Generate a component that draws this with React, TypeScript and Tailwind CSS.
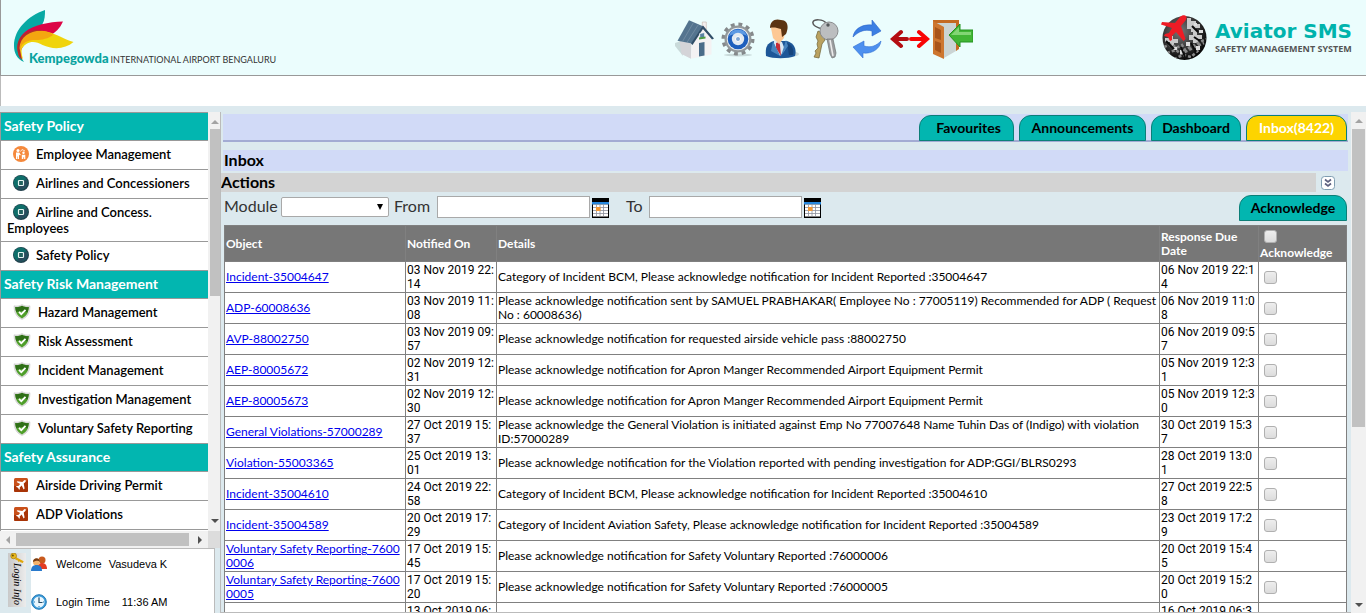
import React from "react";

type Kind = "people" | "dot" | "shield" | "plane";

const menu: { title: string; items: { label: string; kind: Kind }[] }[] = [
  {
    title: "Safety Policy",
    items: [
      { label: "Employee Management", kind: "people" },
      { label: "Airlines and Concessioners", kind: "dot" },
      { label: "Airline and Concess. Employees", kind: "dot" },
      { label: "Safety Policy", kind: "dot" },
    ],
  },
  {
    title: "Safety Risk Management",
    items: [
      { label: "Hazard Management", kind: "shield" },
      { label: "Risk Assessment", kind: "shield" },
      { label: "Incident Management", kind: "shield" },
      { label: "Investigation Management", kind: "shield" },
      { label: "Voluntary Safety Reporting", kind: "shield" },
    ],
  },
  {
    title: "Safety Assurance",
    items: [
      { label: "Airside Driving Permit", kind: "plane" },
      { label: "ADP Violations", kind: "plane" },
    ],
  },
];

const rows: { object: string[]; notified: string[]; details: string[]; due: string[] }[] = [
  { object: ["Incident-35004647"], notified: ["03 Nov 2019 22:", "14"], details: ["Category of Incident BCM, Please acknowledge notification for Incident Reported :35004647"], due: ["06 Nov 2019 22:1", "4"] },
  { object: ["ADP-60008636"], notified: ["03 Nov 2019 11:", "08"], details: ["Please acknowledge notification sent by SAMUEL PRABHAKAR( Employee No : 77005119) Recommended for ADP ( Request", "No : 60008636)"], due: ["06 Nov 2019 11:0", "8"] },
  { object: ["AVP-88002750"], notified: ["03 Nov 2019 09:", "57"], details: ["Please acknowledge notification for requested airside vehicle pass :88002750"], due: ["06 Nov 2019 09:5", "7"] },
  { object: ["AEP-80005672"], notified: ["02 Nov 2019 12:", "31"], details: ["Please acknowledge notification for Apron Manger Recommended Airport Equipment Permit"], due: ["05 Nov 2019 12:3", "1"] },
  { object: ["AEP-80005673"], notified: ["02 Nov 2019 12:", "30"], details: ["Please acknowledge notification for Apron Manger Recommended Airport Equipment Permit"], due: ["05 Nov 2019 12:3", "0"] },
  { object: ["General Violations-57000289"], notified: ["27 Oct 2019 15:", "37"], details: ["Please acknowledge the General Violation is initiated against Emp No 77007648 Name Tuhin Das of (Indigo) with violation", "ID:57000289"], due: ["30 Oct 2019 15:3", "7"] },
  { object: ["Violation-55003365"], notified: ["25 Oct 2019 13:", "01"], details: ["Please acknowledge notification for the Violation reported with pending investigation for ADP:GGI/BLRS0293"], due: ["28 Oct 2019 13:0", "1"] },
  { object: ["Incident-35004610"], notified: ["24 Oct 2019 22:", "58"], details: ["Category of Incident BCM, Please acknowledge notification for Incident Reported :35004610"], due: ["27 Oct 2019 22:5", "8"] },
  { object: ["Incident-35004589"], notified: ["20 Oct 2019 17:", "29"], details: ["Category of Incident Aviation Safety, Please acknowledge notification for Incident Reported :35004589"], due: ["23 Oct 2019 17:2", "9"] },
  { object: ["Voluntary Safety Reporting-7600", "0006"], notified: ["17 Oct 2019 15:", "45"], details: ["Please acknowledge notification for Safety Voluntary Reported :76000006"], due: ["20 Oct 2019 15:4", "5"] },
  { object: ["Voluntary Safety Reporting-7600", "0005"], notified: ["17 Oct 2019 15:", "20"], details: ["Please acknowledge notification for Safety Voluntary Reported :76000005"], due: ["20 Oct 2019 15:2", "0"] },
  { object: [""], notified: ["13 Oct 2019 06:", "31"], details: [""], due: ["16 Oct 2019 06:3", "1"] },
];

const Lines = ({ text }: { text: string[] }) => (
  <>
    {text.map((t, i) => (
      <React.Fragment key={i}>
        {i > 0 && <br />}
        {t}
      </React.Fragment>
    ))}
  </>
);

function MenuIcon({ kind }: { kind: Kind }) {
  if (kind === "people")
    return (
      <svg viewBox="0 0 16 16" className="mr-[7px] ml-1.5 inline-block size-4 align-[-3px]">
        <circle cx="8" cy="8" r="8" fill="#f5893c" />
        <g fill="#fff">
          <circle cx="5" cy="4.4" r="1.5" />
          <path d="M3 6.5h3.2l1.6 2.2-.8.7-1-.9V13H4.800V10.500H4.300V13H3z" />
          <circle cx="10.500" cy="6.800" r="1.200" />
          <path d="M8.800 8.800h3.500V13h-1.200v-1.700h-.8V13H8.800z" />
        </g>
        <path d="M7.500 5.500l1.500-2 3 1.500" stroke="#fff" fill="none" strokeWidth=".8" />
      </svg>
    );
  if (kind === "dot")
    return (
      <svg viewBox="0 0 16 16" className="mr-[7px] ml-1.5 inline-block size-4 align-[-3px]">
        <circle cx="8" cy="8" r="8" fill="#23414d" />
        <circle cx="7.600" cy="7.600" r="7" fill="#0f6e6a" />
        <path d="M13 4a6.500 6.500 0 0 1-9 9z" fill="#2a4b5c" />
        <rect x="5.500" y="5.500" width="5" height="5" rx=".8" fill="#21625f" stroke="#e8f6f3" strokeWidth="1.200" />
      </svg>
    );
  if (kind === "shield")
    return (
      <svg viewBox="0 0 18 16" className="mr-[7px] ml-1.5 inline-block h-4 w-[18px] align-[-3px]">
        <path d="M9 .5c2.500 1.500 5 1.700 8 1.300 0 6-1.500 11-8 13.700C2.500 12.800 1 7.800 1 1.800 4 2.200 6.500 2 9 .5z" fill="#dcdcdc" stroke="#c4c4c4" strokeWidth=".5" />
        <path d="M9 1.800c2.200 1.300 4.500 1.600 6.700 1.300-.2 5-1.700 9-6.700 11.300C4 12.100 2.500 8.100 2.300 3.100 4.500 3.400 6.800 3.100 9 1.800z" fill="#4f9f2a" />
        <path d="M9 1.800c2.200 1.300 4.500 1.600 6.700 1.300-.1 2-.5 4-1.200 5.500C11.500 6.500 7 6.500 3.300 8 2.500 6.500 2.400 5 2.300 3.100 4.500 3.400 6.800 3.100 9 1.800z" fill="#2f6f17" />
        <path d="M6 7.800l2.300 2.300 4.200-4.300" stroke="#fff" strokeWidth="1.800" fill="none" />
      </svg>
    );
  return (
    <svg viewBox="0 0 16 16" className="mr-[7px] ml-1.5 inline-block size-4 align-[-3px]">
      <rect x="1" y="1" width="14" height="14" rx="1.500" fill="#c9501a" />
      <path d="M1 9c5 0 10-2 14-6v10.500a1.500 1.500 0 0 1-1.500 1.500h-11A1.500 1.500 0 0 1 1 13.500z" fill="#a83407" />
      <path d="M12.500 3.200c.6.600.2 1.400-.4 2L10.700 6.600l.9 5-1 .8-1.900-3.800-2 1.900.2 1.600-.8.7-1.100-2-2-1.100.7-.8 1.600.2 1.900-2L3.600 5.100l.8-.9 5 .9 1.300-1.400c.6-.6 1.300-1 1.800-.5z" fill="#fff" />
    </svg>
  );
}

function AirportLogo() {
  return (
    <svg viewBox="0 0 62 54" className="h-[54px] w-[62px]" aria-hidden="true">
      <path d="M32 0C15 6 1 19 1 36c0 7 3 13 10 16-4-6-5-10-4-15C10 29 20 25 29 15c3-5 3-10 3-15z" fill="#08a9a4" />
      <path d="M50 11.500C36 12 20 15 12 22 6 27 4 34 5 40c0 3 1 6 2 8 0-8 3-14 11-18 14-1 26-5 32-18.500z" fill="#dc0546" />
      <path d="M5 41C4 27 14 20 30 21c11 1 20 8 30.500 11-8 7-20 8-31 3-8-5-16-4-21 4 0 4 .5 7 1.500 10C6 46 5.200 44 5 41z" fill="#f0d40c" />
      <path d="M5 41C3 28 14 19 31 21c5 1 7 2 9 4-5 4-13 5.500-20 5-8 1-12 4-12.500 10 0 4 .5 6 1.500 9C6 46 5.500 44 5 41z" fill="#f4a610" />
      <path d="M5 43C1 28 14 17 31 20.500 17 20 7 27 6.500 38l2.500 12C6.500 47.500 5.500 46 5 43z" fill="#b52a2c" />
    </svg>
  );
}

function GlobeLogo() {
  return (
    <svg viewBox="0 0 46 46" className="size-[46px]" aria-hidden="true">
      <defs>
        <radialGradient id="globe" cx=".4" cy=".35" r=".7">
          <stop offset="0" stopColor="#777" />
          <stop offset=".6" stopColor="#333" />
          <stop offset="1" stopColor="#000" />
        </radialGradient>
        <clipPath id="disc"><circle cx="23.500" cy="23" r="22" /></clipPath>
      </defs>
      <circle cx="23.500" cy="23" r="22" fill="url(#globe)" />
      <g clipPath="url(#disc)">
        <path d="M26 3h4v3h5v3h4v4h-4v4h-5v-3h-4zM28 20h4v-4h4v4h5v4h-4v4h-5v-3h-4zM8 21h4v3h5v4h-4v3H9v-4H4v-4h4z" fill="#c9c9c9" />
        <path d="M3 32l8-3 4 4 6-3 3 5 9-5 12-6M6 38l9-3 5 4 8-4 6-3 9-4M13 44l9-4 8 2 9-8" stroke="#898989" strokeWidth="2.500" strokeDasharray="3 2" fill="none" />
        <path d="M25 27h4v4h-4zM33 8h3v3h-3zM38 15h4v3h-4zM12 32h4v3h-4zM19 35h4v4h-4zM35 31h4v4h-4z" fill="#ddd" />
        <path d="M31 11l6 6M5 26l8 8M30 28l5 9M20 32l4 10M33 22l6 4" stroke="#0b0b0b" strokeWidth="2" />
      </g>
      <path d="M24 .5c2 .5 2 3 .5 5L20 11l4.500 13-2 2L15 17l-4 4v4l-2 1-2-4-4-1 1-2 4-1 3-5L0 9.500 1 7l13 1 5-6c1.500-1.500 3.500-2 5-1.500z" fill="#ee1c25" />
    </svg>
  );
}

const toolbar: { name: string; art: React.ReactNode }[] = [
  {
    name: "Home",
    art: (
      <>
        <path d="M0 24l6-2 2 15-8-10z" fill="#c9dada" />
        <path d="M4.500 22l12 2-.5 15.700-9.500-4.700z" fill="#d4d4d8" />
        <path d="M16.700 24.300L28 9l8.500 10v16.500L16 39.700z" fill="#f4f2f3" />
        <path d="M27.300 3h4v10l-4-4z" fill="#f3efee" stroke="#c5b3ab" strokeWidth=".6" />
        <path d="M2.500 21.700L14 1.300l14.500 6.200-11.500 17z" fill="#54748f" />
        <path d="M7.500 22.500l11-19M12 23.300L23.500 5.500" stroke="#7b94a9" strokeWidth=".7" />
        <path d="M28 6.500l11 13-2 1L28 10 17.500 26l-1.500-1.500z" fill="#304e68" />
        <path d="M24.700 14.500l5-1v5l-5 1z" fill="#5a83a3" stroke="#fff" strokeWidth=".8" />
        <path d="M24 18.500l6.500-1v2l-6.500 1z" fill="#4e9b43" />
        <path d="M24 24l5.500-1v13.500l-5.500 1z" fill="#4a6c89" />
      </>
    ),
  },
  {
    name: "Settings",
    art: (
      <>
        <ellipse cx="20" cy="36" rx="14" ry="1.500" fill="#c9dada" />
        <circle cx="20" cy="20" r="14.500" fill="none" stroke="#85898b" strokeWidth="4" strokeDasharray="3.800 3.790" />
        <circle cx="20" cy="20" r="13.500" fill="#93989a" />
        <circle cx="20" cy="20" r="11.200" fill="#e9edf0" />
        <circle cx="20" cy="20" r="10.300" fill="#1e5fbd" />
        <path d="M11 17a9.500 9.500 0 0 1 18 0c-5-3-12-3-18 0z" fill="#5d9ae4" />
        <circle cx="20" cy="20" r="6.200" fill="#e3eaf1" />
        <circle cx="20" cy="20" r="2.500" fill="#7fa6d4" stroke="#fff" />
      </>
    ),
  },
  {
    name: "Profile",
    art: (
      <>
        <ellipse cx="28" cy="35" rx="10" ry="3" fill="#cadada" />
        <path d="M5 37c-1-9 1-13 8-15l13 0c7 2 10 8 8 15-7 3-22 3-29 0z" fill="#1e5798" />
        <path d="M26 24c5 2 7 6 6 12h-4z" fill="#17457d" />
        <path d="M13 21l8 2 3 8-5 6-6-12z" fill="#dbeaf5" />
        <path d="M15 24l3-1 1 3 1 11-5-8z" fill="#c52d39" />
        <path d="M12 22l7 15-9-5zM25 21l2 6-7 10z" fill="#4784bf" />
        <path d="M10 9c1-5 13-5 14 1l-1 9-5 6-6-6z" fill="#fdc894" />
        <path d="M9 9C9 2 14-1 20 1c7 0 8 7 5 14l-4 3-1-8C16 9 13 8 9 9z" fill="#5c3412" />
      </>
    ),
  },
  {
    name: "Change password",
    art: (
      <>
        <path d="M19 10c-6-1-11-4-10-7s10-3 13 1" fill="none" stroke="#585858" strokeWidth="1.500" />
        <path d="M14 12l5 2 2 7-3 4-3 14-5-1 2-4-1-2 3-3-1-4 1-3-2-4z" fill="#baa260" stroke="#6f6135" strokeWidth=".7" />
        <circle cx="25" cy="12" r="9" fill="#bcbec0" stroke="#8a8c8e" />
        <circle cx="24" cy="6" r="1.700" fill="#54585a" />
        <path d="M23 20h6l3 14-1 4-3 1-2-4z" fill="#9b9d9f" stroke="#707274" strokeWidth=".7" />
        <path d="M26 21l3 16" stroke="#ececec" strokeWidth="1.500" />
      </>
    ),
  },
  {
    name: "Refresh",
    art: (
      <>
        <path d="M6 18C7 10 15 5 25 6V1l9 11-9 5v-5c-7-2-13 0-19 6z" fill="#3c7fe3" stroke="#2c65c9" strokeWidth=".6" />
        <path d="M34 22c-1 8-9 13-18 12v5L6 28l11-6v5c7 2 12 0 17-5z" fill="#4d90ef" stroke="#3270d1" strokeWidth=".6" />
      </>
    ),
  },
  {
    name: "Expand",
    art: (
      <>
        <path d="M3 20h14M11 13l-8 7 8 7" fill="none" stroke="#b40d12" strokeWidth="4" strokeLinecap="round" />
        <path d="M21 20h16M29 13l8 7-8 7" fill="none" stroke="#f80505" strokeWidth="4" strokeLinecap="round" />
      </>
    ),
  },
  {
    name: "Log out",
    art: (
      <>
        <path d="M0 1h26v29l-3 2V4H3v30L0 33z" fill="#c46a22" />
        <path d="M3 4h20v28l-12 7z" fill="#cbd4d4" />
        <path d="M0 2l11 6v32L0 35z" fill="#cd762f" />
        <path d="M2 8l6 3v10l-6-2zM2 22l6 2v10l-6-3z" fill="#a85419" />
        <path d="M16 16L27 5v6h13v12H27v5z" fill="#42b535" stroke="#259320" />
        <path d="M18 16l8-8v5h12v3z" fill="#83d575" />
      </>
    ),
  },
];

const Arrow = ({ dir, dim }: { dir: "up" | "down" | "left" | "right"; dim?: boolean }) => (
  <svg viewBox="0 0 8 8" className="size-2 shrink-0" aria-hidden="true">
    <path
      d={{ up: "M0 6h8L4 2z", down: "M0 2h8L4 6z", left: "M6 0v8L2 4z", right: "M2 0v8l4-4z" }[dir]}
      fill={dim ? "#a3a3a3" : "#505050"}
    />
  </svg>
);

const Calendar = () => (
  <svg viewBox="0 0 17 20" className="h-5 w-[17px]" aria-hidden="true">
    <rect width="17" height="20" fill="#000" />
    <rect x="0" y="4" width="17" height="2.500" fill="#2787dd" />
    <rect x="1" y="6.500" width="15" height="12" fill="#fff" />
    <path d="M1 9.500h15M1 12.500h15M1 15.500h15M4.500 6.500v12M8 6.500v12M11.500 6.500v12" stroke="#8b8f9c" strokeWidth=".8" />
    <rect x="4" y="9" width="4.500" height="4" fill="#f49a35" />
  </svg>
);

const box =
  "block size-[13px] appearance-none rounded-[3px] border border-[#b0b0b0] bg-linear-to-b from-[#eeeeee] to-[#dcdcdc]";
const tab = "h-[26px] rounded-t-xl border border-[#0b7f78] text-sm font-bold";

export default function App() {
  return (
    <div className="flex h-screen min-w-[1100px] flex-col overflow-hidden bg-[#dce9ee] font-[Lato,'Noto_Sans',sans-serif] text-black">
      <header className="grid h-[76px] shrink-0 grid-cols-[49.8%_1fr_auto] border-b border-l border-[#999] bg-[#ebfdfd] pr-[14px]">
        <div className="flex">
          <div className="flex pt-2.5 pl-3">
            <AirportLogo />
          </div>
          <div className="-ml-[46px] flex items-baseline gap-0.5 self-end pb-1.5">
            <span className="text-[13px] leading-[18px] font-black text-[#08a39f]">Kempegowda</span>
            <span className="text-[9px] leading-[18px] text-[#333]">INTERNATIONAL AIRPORT BENGALURU</span>
          </div>
        </div>
        <nav className="flex pt-[19px]" aria-label="Tools">
          {toolbar.map((t) => (
            <button key={t.name} aria-label={t.name} className="flex h-10 w-[43px] justify-center">
              <svg viewBox="0 0 40 40" className="size-10">{t.art}</svg>
            </button>
          ))}
        </nav>
        <div className="flex gap-2 pt-[15px]">
          <GlobeLogo />
          <div className="pt-1">
            <div className="font-['DejaVu_Sans',sans-serif] text-xl leading-6 font-bold text-[#00b3ac]">Aviator SMS</div>
            <div className="font-['Open_Sans',sans-serif] text-[9px] leading-3 font-bold text-[#555]">SAFETY MANAGEMENT SYSTEM</div>
          </div>
        </div>
      </header>
      <div className="h-[30px] shrink-0 border-l border-[#bbb] bg-white" />

      <div className="flex min-h-0 flex-1 pt-1.5">
        <aside className="flex w-[221px] shrink-0 flex-col border-r border-[#bbb]">
          <div className="flex min-h-0 flex-1">
            <nav className="w-[208px] overflow-hidden border-t border-l border-[#999] bg-white" aria-label="Modules">
              {menu.map((g) => (
                <section key={g.title}>
                  <h2 className="h-7 border-b border-[#999] bg-[#02b6b0] pl-[3px] text-sm leading-[26px] font-bold text-white">{g.title}</h2>
                  {g.items.map((it) => (
                    <a key={it.label} href="#" className="block min-h-[29px] border-b border-[#999] py-[5px] pr-0.5 pl-1.5 text-[13px] leading-4 font-semibold">
                      <MenuIcon kind={it.kind} />
                      {it.label}
                    </a>
                  ))}
                </section>
              ))}
            </nav>
            <div className="flex flex-1 flex-col items-center justify-between bg-[#f1f1f1] pt-1.5 pb-1.5 pl-0.5">
              <Arrow dir="up" dim />
              <div className="mt-[3px] mb-auto h-[41%] w-full bg-[#c1c1c1]" />
              <Arrow dir="down" />
            </div>
          </div>
          <div className="flex h-[17px] shrink-0 bg-[#f1f1f1]">
            <div className="flex flex-1 items-center pr-1 pl-1">
              <Arrow dir="left" dim />
              <div className="mr-[7px] ml-1 h-[13px] flex-1 bg-[#c1c1c1]" />
              <Arrow dir="right" />
            </div>
            <div className="w-3 bg-[#dcdcdc]" />
          </div>
          <div className="mr-[5px] flex h-[65px] shrink-0 border-t border-r border-[#bbb]">
            <div className="w-[31px] pt-1 pl-2">
              <div className="flex h-[54px] w-[18px] flex-col items-center bg-linear-to-r from-[#c9c9c9] to-[#ececec]">
                <svg viewBox="0 0 18 12" className="h-2.5 w-[18px] shrink-0" aria-hidden="true">
                  <path d="M8 5l9 5-1 2-3-1-1-1-1 1-1-2-3-1z" fill="#e0a80c" />
                  <circle cx="5" cy="3.500" r="3.500" fill="#e9b91c" stroke="#8a6406" strokeWidth=".6" />
                  <circle cx="4" cy="3" r="1.200" fill="#6b5208" />
                </svg>
                <span className="font-['Liberation_Serif',serif] text-[10px] leading-[14px] whitespace-nowrap italic [writing-mode:vertical-rl]">Login Info</span>
              </div>
            </div>
            <div className="flex flex-1 flex-col justify-between bg-white pt-[7px] pb-[3px] font-['Liberation_Sans',sans-serif] text-[11px] leading-4">
              <div className="flex items-center">
                <svg viewBox="0 0 16 16" className="mr-[9px] size-4" aria-hidden="true">
                  <circle cx="11" cy="4" r="3.500" fill="#c95a1e" />
                  <path d="M6 13c0-4 2-6 5-6s5 2 5 6z" fill="#e33c22" />
                  <circle cx="5.500" cy="6" r="3.500" fill="#f4b26b" />
                  <path d="M2 6c0-5 7-5 7 0C7 4 5 5 2 6z" fill="#763c14" />
                  <path d="M0 15c0-4 2-6 5.500-6s5.500 2 5.500 6z" fill="#2879cc" />
                </svg>
                <span>Welcome</span>
                <span className="ml-[7px]">Vasudeva K</span>
              </div>
              <div className="flex items-center">
                <svg viewBox="0 0 16 16" className="mr-[9px] size-4" aria-hidden="true">
                  <circle cx="8" cy="8" r="7.300" fill="#3d9ddb" stroke="#2078b5" />
                  <circle cx="8" cy="8" r="5.500" fill="#e9f6fd" />
                  <path d="M8 4v4.500h3.500" stroke="#244b66" strokeWidth="1.200" fill="none" />
                  <path d="M8 3v1M8 12v1M3 8h1M12 8h1" stroke="#2078b5" />
                </svg>
                <span>Login Time</span>
                <span className="ml-3">11:36 AM</span>
              </div>
            </div>
          </div>
        </aside>

        <main className="min-w-0 flex-1 overflow-hidden border-b border-[#bbb] pt-0.5 pr-[3px]">
          <div className="ml-0.5 flex h-7 items-start justify-end gap-[5px] border-b-2 border-[#a3abd3] bg-[#d1daf7] pt-px pr-px">
            <button className={`${tab} w-[95px] bg-[#02b6b0] pl-1`}>Favourites</button>
            <button className={`${tab} w-[127px] bg-[#02b6b0]`}>Announcements</button>
            <button className={`${tab} w-[90px] bg-[#02b6b0]`}>Dashboard</button>
            <button className={`${tab} w-[101px] bg-[#fdd400] text-white`}>Inbox(8422)</button>
          </div>
          <h1 className="mt-2 ml-0.5 h-[21px] bg-[#d1daf7] pl-px text-base leading-5 font-bold">Inbox</h1>
          <div className="mt-0.5 flex h-[19px] items-center">
            <h2 className="h-full flex-1 bg-[#d3d3d3] text-base leading-[18px] font-bold">Actions</h2>
            <button aria-label="Expand actions" className="mr-[13px] ml-[5px]">
              <svg viewBox="0 0 14 14" className="size-3.5">
                <rect x=".5" y=".5" width="13" height="13" rx="3" fill="#fff" stroke="#7f9db0" />
                <path d="M4 3.500l3 2.500 3-2.500M4 7.500l3 2.500 3-2.500" fill="none" stroke="#5d5f7e" strokeWidth="1.700" />
              </svg>
            </button>
          </div>
          <form className="flex h-[33px] items-start pt-[3px] pr-px pl-[3px] text-base">
            <label htmlFor="module" className="w-[57px] leading-[22px] text-[#333]">Module</label>
            <div className="relative mt-0.5 w-[108px]">
              <select id="module" className="block h-5 w-full appearance-none rounded-[2px] border border-[#a9a9a9] bg-white text-xs">
                <option></option>
              </select>
              <svg viewBox="0 0 6 6" className="pointer-events-none absolute top-[7px] right-1.5 size-1.5"><path d="M0 0h6L3 6z" /></svg>
            </div>
            <label htmlFor="from" className="ml-[5px] w-[43px] leading-[22px] text-[#333]">From</label>
            <input id="from" className="mt-px h-[22px] w-[153px] border border-[#a9a9a9] bg-white px-1 text-xs" />
            <button type="button" aria-label="Pick start date" className="mt-[3px] ml-0.5"><Calendar /></button>
            <label htmlFor="to" className="ml-[17px] w-[23px] leading-[22px] text-[#333]">To</label>
            <input id="to" className="mt-px h-[22px] w-[153px] border border-[#a9a9a9] bg-white px-1 text-xs" />
            <button type="button" aria-label="Pick end date" className="mt-[3px] ml-0.5"><Calendar /></button>
            <button type="button" className={`${tab} ml-auto w-[108px] bg-[#02b6b0]`}>Acknowledge</button>
          </form>
          <div className="pr-px pl-[3px]">
            <table className="w-full table-fixed border-collapse bg-white text-left text-xs leading-[14px]">
              <colgroup>
                <col className="w-[181px]" />
                <col className="w-[91px]" />
                <col />
                <col className="w-[99px]" />
                <col className="w-[88px]" />
              </colgroup>
              <thead className="bg-[#777] text-white">
                <tr className="h-9">
                  {["Object", "Notified On", "Details", "Response Due Date"].map((h) => (
                    <th key={h} className="border border-[#808080] px-px py-0 font-bold">{h}</th>
                  ))}
                  <th className="border border-[#808080] px-px py-0 align-top font-bold">
                    <label className="block pt-1">
                      <input type="checkbox" className={`${box} mb-[3px] ml-1`} />
                      Acknowledge
                    </label>
                  </th>
                </tr>
              </thead>
              <tbody>
                {rows.map((r, i) => (
                  <tr key={i} className="h-[31px]">
                    <td className="border border-[#808080] p-px whitespace-nowrap">
                      <a href="#" className="text-[#0000ee] underline"><Lines text={r.object} /></a>
                    </td>
                    <td className="border border-[#808080] p-px font-[Roboto,sans-serif] whitespace-nowrap"><Lines text={r.notified} /></td>
                    <td className="border border-[#808080] p-px whitespace-nowrap"><Lines text={r.details} /></td>
                    <td className="border border-[#808080] p-px font-[Roboto,sans-serif] whitespace-nowrap"><Lines text={r.due} /></td>
                    <td className="border border-[#808080] p-px">
                      <input type="checkbox" aria-label={`Acknowledge ${r.object.join("")}`} className={`${box} ml-1`} />
                    </td>
                  </tr>
                ))}
              </tbody>
            </table>
          </div>
        </main>

        <div className="flex w-[15px] shrink-0 flex-col items-center bg-[#f1f1f1] pt-[5px] pb-1">
          <Arrow dir="up" dim />
          <div className="mt-1 mb-auto h-[60.5%] w-[13px] bg-[#c1c1c1]" />
          <Arrow dir="down" />
        </div>
      </div>
    </div>
  );
}
